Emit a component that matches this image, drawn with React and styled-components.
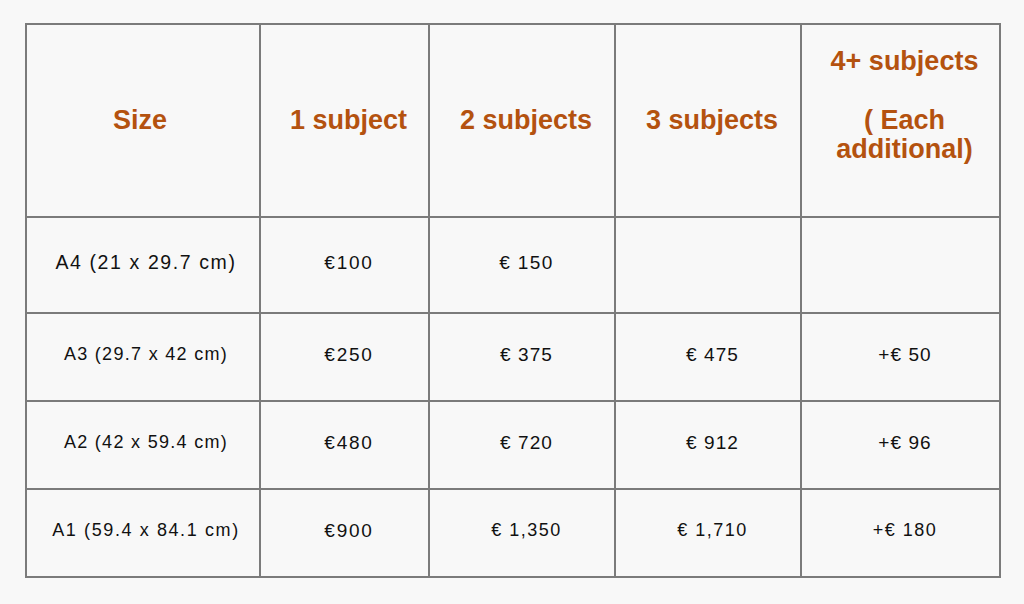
import React from "react";
import styled, { createGlobalStyle } from "styled-components";

const Global = createGlobalStyle`
  html, body { margin: 0; padding: 0; background: #f8f8f8; }
  body { font-family: "Liberation Sans", Arial, sans-serif; }
`;

const Page = styled.div`
  padding: 23px 0 0 25px;
  height: 604px;
  box-sizing: border-box;
  background: #f8f8f8;
`;

const Table = styled.table`
  border-collapse: collapse;
  table-layout: fixed;
  width: 974px;
  background: #f8f8f8;
`;

const HeadCell = styled.th`
  border: 2px solid #7b7b7b;
  height: 193px;
  padding: ${(p) => (p.$first ? "0 10px 0 4px" : "0 4px 0 12px")};
  box-sizing: border-box;
  color: #b4520f;
  font-weight: 700;
  font-size: 27px;
  line-height: 29.5px;
  text-align: center;
  vertical-align: middle;
`;

const Row = styled.tr`
  height: ${(p) => p.$h}px;
`;

const Cell = styled.td`
  border: 2px solid #7b7b7b;
  padding: ${(p) => (p.$label ? "0 2px 5px 8px" : "0 2px 5px 11px")};
  color: #111;
  font-size: ${(p) => p.$size}px;
  letter-spacing: ${(p) => p.$ls}px;
  line-height: 1.15;
  text-align: center;
  vertical-align: middle;
  white-space: nowrap;
`;

const cols = [234, 169, 186, 186, 199];

const rows = [
  {
    h: 96,
    label: "A4 (21 x 29.7 cm)",
    size: 19.5,
    ls: 1.6,
    vals: ["€100", "€ 150", "", ""],
    vsize: 19,
    vls: 1.4,
  },
  {
    h: 88,
    label: "A3 (29.7 x 42 cm)",
    size: 18,
    ls: 1.3,
    vals: ["€250", "€ 375", "€ 475", "+€ 50"],
    vsize: 19,
    vls: 1.1,
  },
  {
    h: 88,
    label: "A2 (42 x 59.4 cm)",
    size: 18,
    ls: 1.3,
    vals: ["€480", "€ 720", "€ 912", "+€ 96"],
    vsize: 19,
    vls: 1.1,
  },
  {
    h: 88,
    label: "A1 (59.4 x 84.1 cm)",
    size: 18,
    ls: 1.6,
    vals: ["€900", "€ 1,350", "€ 1,710", "+€ 180"],
    vsize: 18,
    vls: 1.5,
  },
];

export default function App() {
  return (
    <Page>
      <Global />
      <Table>
        <colgroup>
          {cols.map((w, i) => (
            <col key={i} style={{ width: w }} />
          ))}
        </colgroup>
        <thead>
          <tr>
            <HeadCell $first>Size</HeadCell>
            <HeadCell>1 subject</HeadCell>
            <HeadCell>2 subjects</HeadCell>
            <HeadCell>3 subjects</HeadCell>
            <HeadCell>
              4+ subjects
              <br />
              <br />( Each additional)
              <br />
              {"\u00a0"}
            </HeadCell>
          </tr>
        </thead>
        <tbody>
          {rows.map((r) => (
            <Row key={r.label} $h={r.h}>
              <Cell $label $size={r.size} $ls={r.ls}>
                {r.label}
              </Cell>
              {r.vals.map((v, i) => (
                <Cell
                  key={i}
                  $size={i === 0 ? 19 : r.vsize}
                  $ls={i === 0 ? 1.8 : r.vls}
                >
                  {v}
                </Cell>
              ))}
            </Row>
          ))}
        </tbody>
      </Table>
    </Page>
  );
}
